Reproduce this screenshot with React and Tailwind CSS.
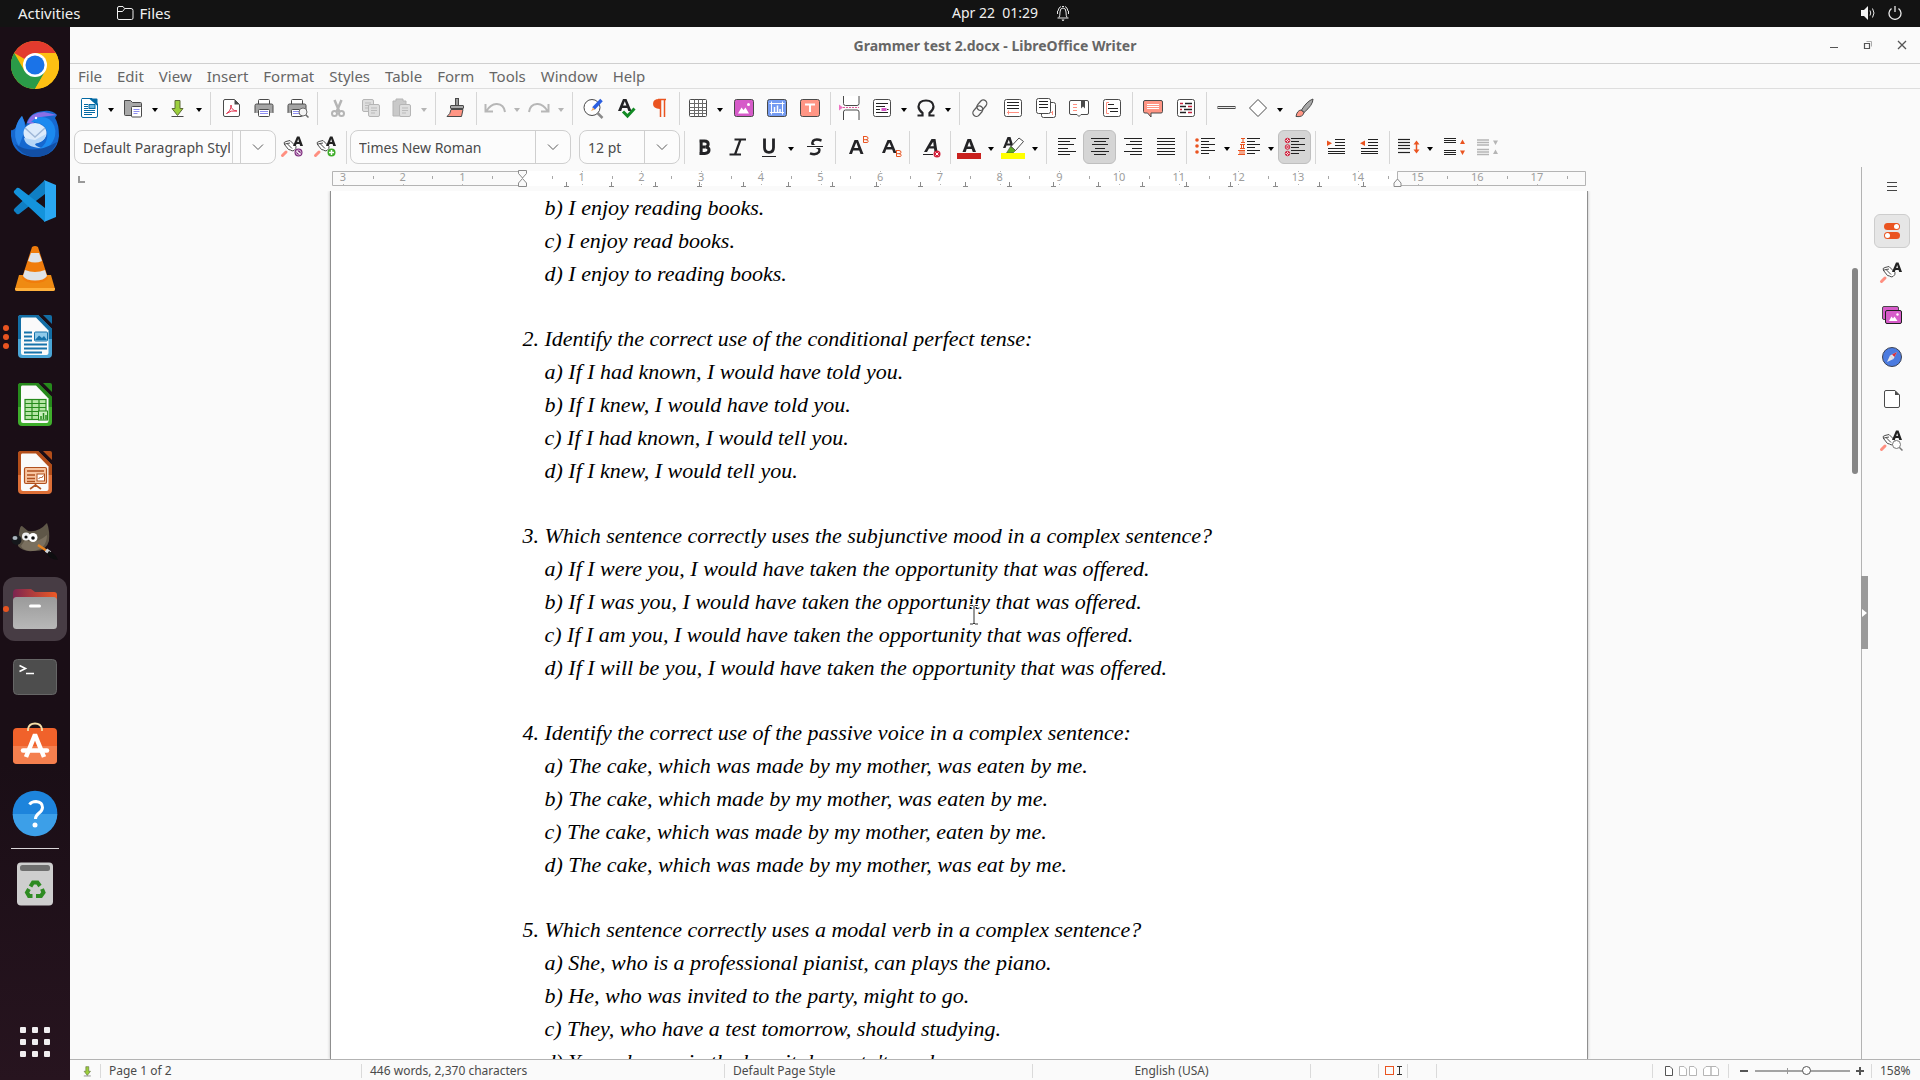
import React from "react";

const LINE = "#4a4a4a";

/* ---------- toolbar icons (24 x 24 grid) ---------- */

const lines = (rows, stroke = "#222", w = 1) =>
  rows.map(([x1, x2, y], i) => <path key={i} d={`M${x1} ${y}H${x2}`} stroke={stroke} strokeWidth={w} />);

const roller = (
  <g>
    <path d="M1.500 20.500l3.500-3.500" stroke="#ff8f80" strokeWidth="3" strokeLinecap="round" />
    <path d="M7.500 14.500L3.500 9.500Q2 7 5 6.500L9 5.500L15 11.500Q15.500 14 13 15.500Q11 16.500 9.500 15Z" fill="#fff" stroke={LINE} />
    <path d="M3 9.500L6 8.500L11 13.500M6 8.500L9 8" stroke={LINE} fill="none" />
    <path d="M12 11L16 1.500H18.500L22 11H19.200L18.600 9H15.500L14.800 11Z M16.200 7H18L17.200 4Z" fill="#222" />
  </g>
);

const docIcon = (
  <>
    <path d="M5 2.500H15L20.500 8V20a1.500 1.500 0 0 1-1.500 1.500H6A1.500 1.500 0 0 1 4.500 20V3.500a1 1 0 0 1 1-1Z" fill="#fff" stroke="#0369a3" />
    <path d="M12 2.500H19.500a1 1 0 0 1 1 1V10Z" fill="#0369a3" />
    {lines([[7, 11, 8.5], [7, 11, 10.5], [7, 11, 12.5], [7, 18, 14.5], [7, 18, 16.5], [7, 15, 18.5]], "#0369a3")}
    <rect x="12" y="8.500" width="6" height="4" fill="#69b5dd" stroke="#0369a3" />
  </>
);

const printer = (
  <>
    <rect x="6.500" y="3.500" width="11" height="6" rx="1" fill="#fff" stroke={LINE} />
    <rect x="3" y="8" width="18" height="9" rx="1.500" fill="#a5a5a5" />
    <path d="M3 17V9.500Q3 8 4.500 8H19.500Q21 8 21 9.500V17" stroke={LINE} fill="none" />
    <rect x="6.500" y="13.500" width="11" height="7" rx="1" fill="#fff" stroke={LINE} />
    {lines([[8, 16, 15.5], [8, 16, 17.5]], "#8d8df0")}
  </>
);

const page = (x, y, fill, stroke, line) => (
  <g>
    <rect x={x} y={y} width="11" height="12" rx="1.500" fill={fill} stroke={stroke} />
    {lines([[x + 2.5, x + 8.5, y + 3.5], [x + 2.5, x + 8.5, y + 6], [x + 2.5, x + 6.5, y + 8.5]], line)}
  </g>
);

const bold = "#232326";

const ICONS = {
  doc: docIcon,
  open: (
    <>
      <path d="M3.500 4.500H9.500L11.500 6.500H19.500a1 1 0 0 1 1 1V18.500a1 1 0 0 1-1 1H4.500a1 1 0 0 1-1-1Z" fill="#a8a8a8" stroke={LINE} />
      <rect x="10.500" y="10.500" width="10" height="10.500" rx="1" fill="#fff" stroke={LINE} />
      {lines([[12.5, 18.5, 13.5], [12.5, 18.5, 15.5], [12.5, 16.500, 17.5]], "#8d8df0")}
    </>
  ),
  save: (
    <>
      <path d="M10 4.500H15V12.500H18L12.500 19.500L7 12.500H10Z" fill="#9bcf3c" stroke="#5c6b35" />
      <path d="M6.500 20.500H18.500" stroke={LINE} />
    </>
  ),
  pdf: (
    <>
      <path d="M6 3.500H15.500L20.500 8.500V19a1.500 1.500 0 0 1-1.500 1.500H6A1.500 1.500 0 0 1 4.500 19V5A1.500 1.500 0 0 1 6 3.500Z" fill="#fff" stroke={LINE} />
      <path d="M15.500 3.500V8.500H20.500Z" fill={LINE} />
      <path d="M7.500 17.500Q12 15 12 9Q12 14.500 18 15Q12 14 7.500 17.500Z" stroke="#e0344f" fill="none" />
    </>
  ),
  print: printer,
  preview: (
    <>
      {printer}
      <circle cx="18" cy="16" r="4" fill="#f4f4f4" stroke="#6b6b6b" />
      <path d="M21 19L23.500 21.500" stroke="#6b6b6b" strokeWidth="1.500" />
    </>
  ),
  cut: (
    <g stroke="#b5b5b5" fill="none">
      <path d="M8.500 4L13.500 16M15.500 4L10.500 16" strokeWidth="2.500" />
      <circle cx="8.500" cy="17.500" r="2.500" strokeWidth="2" />
      <circle cx="15.500" cy="17.500" r="2.500" strokeWidth="2" />
    </g>
  ),
  copy: (<>{page(3.5, 3.5, "#dedede", "#b5b5b5", "#bbb")}{page(9.5, 8.5, "#dedede", "#b5b5b5", "#bbb")}</>),
  paste: (
    <>
      <path d="M3 5H6V3H13V5H16V20H3Z" fill="#c9c9c9" stroke="#b5b5b5" />
      {page(9.5, 8.5, "#dedede", "#b5b5b5", "#bbb")}
    </>
  ),
  brush: (
    <>
      <rect x="11.500" y="2.500" width="3" height="8" fill="#9b9b9b" stroke={LINE} />
      <rect x="6.500" y="9.500" width="13" height="3" rx=".5" fill="#a8a8a8" stroke={LINE} />
      <path d="M7 13.500H19L17.500 20.500H3Q6.500 18 7 13.500Z" fill="#ff9584" stroke={LINE} />
    </>
  ),
  undo: <path d="M2.500 8V15.500H10M3.500 15Q8 7.500 14 8Q21 8.500 22 16" stroke="#b7b7b7" strokeWidth="2" fill="none" />,
  redo: <path d="M21.500 8V15.500H14M20.500 15Q16 7.500 10 8Q3 8.500 2 16" stroke="#b7b7b7" strokeWidth="2" fill="none" />,
  find: (
    <>
      <circle cx="11" cy="11.500" r="8" fill="#fff" stroke={LINE} />
      <path d="M16.500 17L21.500 22" stroke="#8a8a8a" strokeWidth="2.500" />
      <path d="M12.500 12.500L20.500 4" stroke="#2b5fe0" strokeWidth="3.500" />
      <path d="M10 15L12 11.500L14 13.500Z" fill="#f0b26a" />
    </>
  ),
  spell: (
    <>
      <path d="M4 15L9 3H12.500L17.500 15H14.300L13.300 12H8.200L7.200 15Z M9.100 9.600H12.400L10.800 5.300Z" fill={bold} fillRule="evenodd" />
      <path d="M9 15.500L13.500 20L20.500 12.500" stroke="#128a24" strokeWidth="3" fill="none" />
    </>
  ),
  pilcrow: (
    <>
      <path d="M13 3V13Q6 12.500 6 8Q6 3 12 3Z" fill="#ea5420" />
      <path d="M11 3.500H19M13.500 3V21M17.500 3V21" stroke="#ea5420" strokeWidth="1.500" />
    </>
  ),
  table: (
    <>
      <rect x="3.500" y="3.500" width="17" height="17" rx="1" fill="#fff" stroke={LINE} />
      <path d="M3.500 7.500H20.500M3.500 11.500H20.500M3.500 14.500H20.500M3.500 17.500H20.500M8.500 3.500V20.500M12.500 3.500V20.500M16.500 3.500V20.500" stroke="#6a6a6a" />
    </>
  ),
  image: (
    <>
      <rect x="2.500" y="3.500" width="19" height="17" rx="2" fill="#d65bc9" stroke={LINE} />
      <path d="M6 17.500L9.500 11.500L11.500 14L13.500 11.500L17 17.500Z" fill="#fff" />
      <circle cx="16.500" cy="8.500" r="1.500" fill="#fff" />
    </>
  ),
  chart: (
    <>
      <rect x="2.500" y="3.500" width="19" height="17" rx="2" fill="#759cf2" stroke={LINE} />
      <path d="M4.500 7.500H19.500M6.500 5.500V18.500M17.500 5.500V18.500M5 16.500H19" stroke="#fff" />
      <path d="M9.500 16V11M12.500 16V9.500M15 16V13" stroke="#fff" strokeWidth="1.500" />
    </>
  ),
  textbox: (
    <>
      <rect x="2.500" y="3.500" width="19" height="17" rx="2" fill="#ff9584" stroke={LINE} />
      <path d="M7 8.500H17M12 8.500V16" stroke="#fff" strokeWidth="2" />
    </>
  ),
  pagebreak: (
    <>
      <path d="M4.500 0V7.500Q4.500 9.500 6.500 9.500H18Q20 9.500 20 7.500V0" fill="#fff" stroke={LINE} />
      <path d="M4.500 24V16Q4.500 14 6.500 14H18Q20 14 20 16V24" fill="#fff" stroke={LINE} />
      <path d="M4 11.500H20" stroke="#e05a9c" strokeDasharray="2 1" />
      <path d="M0 8.500V14.500L4 11.500Z" fill="#ee72c2" />
    </>
  ),
  field: (
    <>
      <rect x="3.500" y="3.500" width="17" height="17" rx="2" fill="#fff" stroke={LINE} />
      {lines([[6, 18, 7.5], [6, 15, 10.5], [6, 10, 13.5], [6, 18, 16.5]])}
      <rect x="11.500" y="12" width="5" height="3" fill="#d65bc9" />
      <path d="M17 13.500H18.500" stroke="#222" />
    </>
  ),
  omega: (
    <path d="M3.500 19.500H8.500V17Q4.500 14 4.500 10.500Q5 4.500 12 4.500Q19 4.500 19.500 10.500Q19.500 14 15.500 17V19.500H20.500" stroke={bold} strokeWidth="2.200" fill="none" />
  ),
  link: (
    <g fill="none" stroke="#5a5a5a" strokeWidth="1.300">
      <rect x="10.500" y="3.500" width="7" height="11.500" rx="3.500" transform="rotate(40 14 9)" />
      <rect x="6.500" y="9.500" width="7" height="11.500" rx="3.500" transform="rotate(40 10 15)" />
    </g>
  ),
  footnote: (
    <>
      <rect x="3.500" y="3.500" width="17" height="17" rx="2" fill="#fff" stroke={LINE} />
      {lines([[6, 18, 6.5], [6, 18, 9.500], [6, 18, 12.5]])}
      <path d="M6 16.500H18M7.500 14.500V18.500" stroke="#ff8f80" />
    </>
  ),
  endnote: (
    <>
      <rect x="7.500" y="6.500" width="14" height="15" rx="2" fill="#fff" stroke={LINE} />
      <path d="M18.500 15V19M17 16.500H19" stroke="#ff8f80" />
      <rect x="2.500" y="2.500" width="14" height="15" rx="2" fill="#fff" stroke={LINE} />
      {lines([[5, 14, 5.5], [5, 14, 8.5], [5, 14, 11.5]])}
    </>
  ),
  bookmark: (
    <>
      <path d="M4 4.500H20Q21.500 4.500 21.500 6V17Q21.500 18.500 20 18.500H14L12 20.500L10 18.500H4Q2.500 18.500 2.500 17V6Q2.500 4.500 4 4.500Z" fill="#fff" stroke={LINE} />
      {lines([[6, 10, 8.500], [6, 10, 11.5], [6, 10, 14.5]], "#ff8f80")}
      <path d="M14 5H18V12.500L16 10.500L14 12.500Z" fill={LINE} />
    </>
  ),
  crossref: (
    <>
      <rect x="3.500" y="3.500" width="17" height="17" rx="2" fill="#fff" stroke={LINE} />
      {lines([[8, 14, 8.5], [8, 18, 12.5], [10, 18, 15.5]])}
      <path d="M9 6.500H6.500V17.500H9" stroke="#ff8f80" fill="none" />
    </>
  ),
  comment: (
    <>
      <path d="M4 4.500H20Q21.500 4.500 21.500 6V15.500Q21.500 17 20 17H10V21L6.500 17H4Q2.500 17 2.500 15.500V6Q2.500 4.500 4 4.500Z" fill="#ff9584" stroke={LINE} />
      {lines([[6, 18, 8.5], [6, 18, 10.5], [6, 18, 12.5]], "#fff")}
    </>
  ),
  track: (
    <>
      <rect x="3.500" y="3.500" width="17" height="17" rx="2" fill="#fff" stroke={LINE} />
      {lines([[6, 9, 7.5], [14, 18, 10.5], [6, 8, 13.5], [14, 18, 16.5]], "#c9243f", 1.5)}
      {lines([[11, 18, 7.5], [6, 12, 10.500], [10, 18, 13.5], [6, 12, 16.5]], "#222", 1.5)}
    </>
  ),
  hline: <rect x="3" y="10.500" width="17" height="2" fill="#e8e8e8" stroke={LINE} />,
  shape: <path d="M12 3.500L20.500 12L12 20.500L3.500 12Z" fill="#fff" stroke={LINE} />,
  draw: (
    <>
      <path d="M21 3Q15 5 9.500 14L12 16.500Q21 9 21 3Z" fill="#a8a8a8" stroke={LINE} />
      <path d="M9 14Q5 14.500 4 20.500Q11 21.500 12 16.500Z" fill="#ff9584" stroke={LINE} />
    </>
  ),
  rollerNew: (
    <>
      {roller}
      <circle cx="17.500" cy="17.500" r="4" fill="#7c2a7c" />
      <path d="M15.500 16L19.500 19.500" stroke="#fff" strokeWidth="1.300" />
      <circle cx="17.500" cy="17.500" r="2.500" fill="none" stroke="#d9b9d9" />
    </>
  ),
  rollerAdd: (
    <>
      {roller}
      <circle cx="17.500" cy="17.500" r="4" fill="#3fae2a" />
      <path d="M15 17.500H20M17.500 15V20" stroke="#fff" strokeWidth="1.500" />
    </>
  ),
  roller,
  rollerFind: (
    <>
      {roller}
      <circle cx="16.500" cy="15.500" r="4" fill="#fff" stroke="#777" />
      <path d="M19.500 18.500L22.500 21.500" stroke="#777" strokeWidth="1.500" />
    </>
  ),
  bold: <path d="M6 4.500H12Q16.500 4.500 16.500 8.200Q16.500 11 13.500 11.700Q17.500 12.200 17.500 15.500Q17.500 19.500 12.500 19.500H6M8 4.500V19.500M8 11.700H13" stroke={bold} strokeWidth="3.600" fill="none" transform="translate(1.500 2.200) scale(.83)" />,
  italic: <path d="M8.500 4.500H20M3.500 19.500H15M14.500 4.500L9 19.500" stroke={bold} strokeWidth="2.200" fill="none" />,
  underline: (
    <>
      <path d="M7.500 3.500V12.500Q7.500 17.300 12 17.300Q16.500 17.300 16.500 12.500V3.500" stroke={bold} strokeWidth="2.800" fill="none" />
      <path d="M5 21.500H19" stroke={bold} />
    </>
  ),
  strike: (
    <>
      <path d="M18.500 5.500Q12.500 3.500 10 6Q8 9.500 12.500 11.500Q18 13.500 16 17Q13 20.500 7 18.300" stroke={bold} strokeWidth="2.500" fill="none" />
      <path d="M4 11.500H20" stroke="#fafafa" strokeWidth="3" />
      <path d="M4 11.500H20" stroke={bold} />
    </>
  ),
  sup: (
    <>
      <path d="M5 19L10.500 5H14L19.500 19H16.500L15.200 15.500H9.200L8 19Z M10.100 13H14.300L12.300 7.500Z" fill={bold} fillRule="evenodd" />
      <path d="M19.500 1.500H22Q24 1.500 24 3.200T22 4.700H19.500M22 4.700Q24.200 4.700 24.200 6.300T22 7.500H19.500V1" stroke="#ea5420" fill="none" />
    </>
  ),
  sub: (
    <>
      <path d="M5 18L10.500 5H14L19.500 18H16.500L15.200 14.500H9.200L8 18Z M10.100 12H14.300L12.300 7.500Z" fill={bold} fillRule="evenodd" />
      <path d="M19.500 15.500H22Q24 15.500 24 17.200T22 18.700H19.500M22 18.700Q24.200 18.700 24.200 20.300T22 21.500H19.500V15" stroke="#ea5420" fill="none" />
    </>
  ),
  clear: (
    <>
      <path d="M6 17L13.500 4H17.500L19.500 17H16.500L16 13.500H11L9 17Z M12.300 11.200H15.700L15.200 6.800Z" fill={bold} fillRule="evenodd" />
      <path d="M5 19.500H15" stroke={bold} />
      <circle cx="19" cy="19" r="3.500" fill="#d3213b" />
      <path d="M17.500 17.500L20.500 20.500M20.500 17.500L17.500 20.500" stroke="#fff" />
    </>
  ),
  fontcolor: (
    <>
      <path d="M5.500 17L10.500 4H14L19 17H15.800L14.700 14H9.700L8.700 17Z M10.500 11.500H13.900L12.200 6.800Z" fill={bold} fillRule="evenodd" />
      <rect x="0" y="18" width="24" height="6" fill="#c9211e" />
    </>
  ),
  highlight: (
    <>
      <path d="M2 13L6.500 2H9.500L13 13H10.500L9.500 10.500H5.500L4.500 13Z M6.300 8.500H9L7.800 4.800Z" fill={bold} fillRule="evenodd" />
      <path d="M10 11.500L18 3L22.500 6.500L14.500 15.500Z" fill="#fff" stroke={LINE} />
      <path d="M5.500 18L9.500 11.500L14.500 15.500L12 18Z" fill="#5fae1f" stroke={LINE} strokeWidth=".6" />
      <rect x="0" y="18" width="24" height="6" fill="#ffff00" />
    </>
  ),
  left: lines([[3, 21, 3.5], [3, 15, 6.5], [3, 19, 9.5], [3, 13, 13.5], [3, 21, 16.5], [3, 15, 19.500]]),
  center: lines([[3, 21, 3.5], [6, 18, 6.5], [4, 20, 9.5], [7, 17, 13.5], [3, 21, 16.5], [6, 18, 19.500]]),
  right: lines([[3, 21, 3.5], [9, 21, 6.5], [5, 21, 9.5], [11, 21, 13.5], [3, 21, 16.5], [9, 21, 19.500]]),
  justify: lines([[3, 21, 3.5], [3, 21, 6.5], [3, 21, 9.5], [3, 21, 13.5], [3, 21, 16.5], [3, 21, 19.500]]),
  bullets: (
    <>
      {lines([[8, 22, 3.5], [8, 16, 6.5], [8, 22, 9.5], [8, 16, 12.5], [8, 22, 15.5], [8, 16, 18.5]])}
      {[5, 11, 17].map((y) => <circle key={y} cx="4" cy={y} r="1.800" fill="#ea5420" />)}
    </>
  ),
  numbers: (
    <>
      {lines([[10, 23, 3.5], [10, 18, 6.5], [10, 23, 9.5], [10, 18, 12.5], [10, 23, 15.5], [10, 18, 18.5]])}
      <path d="M4 3.500H8M6 3.500V7M4 7.500H8M3 9.500H8M4.500 9.500V13M6.500 9.500V13M3 13.500H8M1 15.500H8M3 15.500V19M5 15.500V19M7 15.500V19M1 19.500H8" stroke="#ea5420" />
    </>
  ),
  nolist: (
    <>
      {lines([[8, 22, 3.5], [8, 16, 6.5], [8, 22, 9.5], [8, 16, 12.5], [8, 22, 15.5], [8, 16, 18.5]])}
      {[5.5, 12, 18.5].map((y) => (
        <g key={y} stroke="#cf2a45">
          <circle cx="4.500" cy={y} r="2.300" fill="#f6d8dc" />
          <path d={`M3 ${y - 1.5}l3 3M6 ${y - 1.5}l-3 3`} />
        </g>
      ))}
    </>
  ),
  indent: (
    <>
      {lines([[11, 21, 4.5], [11, 21, 7.500], [11, 21, 10.5], [4, 21, 13.5], [4, 21, 16.5], [4, 21, 18.500]])}
      <path d="M3 5.500V11L8 8.300Z" fill="#ea5420" />
    </>
  ),
  outdent: (
    <>
      {lines([[11, 21, 4.5], [11, 21, 7.500], [11, 21, 10.5], [4, 21, 13.5], [4, 21, 16.5], [4, 21, 18.500]])}
      <path d="M8 5.500V11L3 8.300Z" fill="#ea5420" />
    </>
  ),
  spacing: (
    <>
      {lines([[2, 14, 4.500], [2, 14, 7.500], [2, 14, 10.5], [2, 14, 13.500], [2, 14, 17.500]], "#222", 1.2)}
      <path d="M20.500 8V16" stroke="#ea5420" strokeWidth="1.500" />
      <path d="M17.500 9.500L20.500 5.500L23.500 9.500ZM17.500 14.500L20.500 18.500L23.500 14.500Z" fill="#ea5420" />
    </>
  ),
  paraMore: (
    <>
      {lines([[2, 14, 3.500], [2, 14, 5.500], [2, 14, 7.5], [2, 14, 15.500], [2, 14, 17.500], [2, 14, 19.5]])}
      <path d="M18 9L20.500 4.500L23 9ZM18 15.500L20.500 20L23 15.500Z" fill="#ea5420" />
    </>
  ),
  paraLess: (
    <>
      {lines([[2, 14, 5], [2, 14, 7.500], [2, 14, 10], [2, 14, 14.500], [2, 14, 17], [2, 14, 19.500]], "#b5b5b5", 1.5)}
      <path d="M18 5.500L20.500 10L23 5.500ZM18 19L20.500 14.500L23 19Z" fill="#b5b5b5" />
    </>
  ),
  properties: (
    <>
      <rect x="4" y="4" width="16" height="7" rx="3.500" fill="#ea5420" />
      <rect x="4" y="13" width="16" height="7" rx="3.500" fill="#ea5420" />
      <circle cx="16.500" cy="7.500" r="2.500" fill="#fff" />
      <circle cx="7.500" cy="16.500" r="2.500" fill="#fff" />
    </>
  ),
  gallery: (
    <>
      <rect x="2.500" y="3.500" width="16" height="13" rx="1.500" fill="#d65bc9" stroke={LINE} />
      <rect x="5.500" y="7.500" width="16" height="13" rx="1.500" fill="#d65bc9" stroke="#1f1f1f" />
      <path d="M9 18L11.500 13.500L13 15.500L14.500 13.500L17.500 18Z" fill="#fff" />
      <circle cx="17.500" cy="11.500" r="1.200" fill="#fff" />
    </>
  ),
  navigator: (
    <>
      <circle cx="12" cy="12" r="9.500" fill="#4b7be0" stroke="#3c4254" />
      <path d="M7 17L10 10.500L13.500 14Z" fill="#e6e6ea" />
      <path d="M10 10.500L17 7L13.500 14Z" fill="#e6e6ea" />
      <path d="M12 9.500L17 7L14.500 12Z" fill="#d6303f" />
    </>
  ),
  pageDeck: (
    <>
      <path d="M6 3.500H15L19.500 8V19Q19.500 20.500 18 20.500H6Q4.500 20.500 4.500 19V5Q4.500 3.500 6 3.500Z" fill="#fff" stroke={LINE} />
      <path d="M15 3.500V8H19.500Z" fill={LINE} />
    </>
  ),
  menu: <path d="M7 7.500H17M7 11.500H17M7 15.500H17" stroke="#444" />,
};

function Icon({ name, className = "size-6" }) {
  return (
    <svg viewBox="0 0 24 24" className={`${className} shrink-0 overflow-visible`} fill="none" aria-hidden="true">
      {ICONS[name]}
    </svg>
  );
}

function Tool({ name, label, active }) {
  return (
    <button
      aria-label={label}
      aria-pressed={active ? true : undefined}
      className={`flex h-[34px] w-[33px] shrink-0 items-center justify-center rounded-md border ${active ? "border-[#bfbfbf] bg-[#d5d5d5]" : "border-transparent"}`}
    >
      <Icon name={name} />
    </button>
  );
}

function Split({ name, label, muted }) {
  return (
    <div className="flex shrink-0">
      <button aria-label={label} className="flex h-[34px] w-[29px] items-center justify-center">
        <Icon name={name} />
      </button>
      <button aria-label={`${label} options`} className="flex h-[34px] w-[15px] items-center justify-center pt-[4px]">
        <svg viewBox="0 0 6 4" className="h-[4px] w-[6px]" aria-hidden="true">
          <path d="M0 0H6L3 4Z" fill={muted ? "#b5b5b5" : "#000"} />
        </svg>
      </button>
    </div>
  );
}

function Combo({ value, label, className, inner }) {
  return (
    <div className={`flex h-[34px] shrink-0 overflow-hidden rounded-lg border border-[#cfcfcf] bg-[#fcfcfc] ${className}`}>
      <div className="flex min-w-0 flex-1 pr-[2px] pl-[8px]">
        <input aria-label={label} defaultValue={value} className="w-full min-w-0 bg-transparent text-[14px] text-[#4a4a4a] outline-none" />
      </div>
      {inner && <span className="w-[8px] border-l border-[#d5d5d5]" />}
      <button aria-label={`${label} list`} className="flex w-[35px] items-center justify-center border-l border-[#cfcfcf]">
        <svg viewBox="0 0 12 8" className="h-[8px] w-[12px]" fill="none" stroke="#5a5a5a" aria-hidden="true">
          <path d="M1 1.500L6 6.500L11 1.500" />
        </svg>
      </button>
    </div>
  );
}

const ROW1 = [
  ["s", "doc", "New"], ["s", "open", "Open"], ["s", "save", "Save"], "|",
  ["t", "pdf", "Export as PDF"], ["t", "print", "Print"], ["t", "preview", "Print Preview"], "|",
  ["t", "cut", "Cut"], ["t", "copy", "Copy"], ["s", "paste", "Paste", true], "|",
  ["t", "brush", "Clone Formatting"], "|",
  ["s", "undo", "Undo", true], ["s", "redo", "Redo", true], "|",
  ["t", "find", "Find and Replace"], ["t", "spell", "Check Spelling"], ["t", "pilcrow", "Formatting Marks"], "|",
  ["s", "table", "Insert Table"], ["t", "image", "Insert Image"], ["t", "chart", "Insert Chart"], ["t", "textbox", "Insert Text Box"], "|",
  ["t", "pagebreak", "Insert Page Break"], ["s", "field", "Insert Field"], ["s", "omega", "Insert Special Character"], "|",
  ["t", "link", "Insert Hyperlink"], ["t", "footnote", "Insert Footnote"], ["t", "endnote", "Insert Endnote"], ["t", "bookmark", "Insert Bookmark"], ["t", "crossref", "Insert Cross-reference"], "|",
  ["t", "comment", "Insert Comment"], ["t", "track", "Track Changes"], "|",
  ["t", "hline", "Insert Line"], ["s", "shape", "Basic Shapes"], ["t", "draw", "Show Draw Functions"],
];

const ROW2 = [
  "|", ["t", "bold", "Bold"], ["t", "italic", "Italic"], ["s", "underline", "Underline"], ["t", "strike", "Strikethrough"], "|",
  ["t", "sup", "Superscript"], ["t", "sub", "Subscript"], "|",
  ["t", "clear", "Clear Formatting"], "|",
  ["s", "fontcolor", "Font Color"], ["s", "highlight", "Highlighting Color"], "|",
  ["t", "left", "Align Left"], ["t", "center", "Align Center", false, true], ["t", "right", "Align Right"], ["t", "justify", "Justified"], "|",
  ["s", "bullets", "Unordered List"], ["s", "numbers", "Ordered List"], ["t", "nolist", "No List", false, true], "|",
  ["t", "indent", "Increase Indent"], ["t", "outdent", "Decrease Indent"], "|",
  ["s", "spacing", "Line Spacing"], ["t", "paraMore", "Increase Paragraph Spacing"], ["t", "paraLess", "Decrease Paragraph Spacing"],
];

function Divider() {
  return (
    <span className="flex w-[8px] shrink-0 items-center justify-center">
      <span className="h-[33px] w-px bg-[#d6d6d6]" />
    </span>
  );
}

const renderTools = (items) =>
  items.map((it, i) =>
    it === "|" ? <Divider key={i} />
      : it[0] === "s" ? <Split key={i} name={it[1]} label={it[2]} muted={it[3]} />
        : <Tool key={i} name={it[1]} label={it[2]} active={it[4]} />
  );

/* ---------- ruler ---------- */

function Ruler() {
  const unit = 59.7;
  const zero = 191;
  const marks = [];
  for (let n = -3; n <= 17; n++) marks.push(n);
  const tabs = Array.from({ length: 19 }, (_, i) => zero + 44.27 * (i + 1));
  return (
    <svg viewBox="0 0 1256 24" className="h-6 w-[1256px] shrink-0" fontFamily="'Noto Sans', sans-serif" fontSize="11" aria-label="Ruler">
      <rect x="191" y="4" width="875" height="15" fill="#fff" />
      <path d="M191 4.500H1.500V18.500H191M1066.500 19V4.500H1254.500V18.500H1066" fill="none" stroke="#b4b4b4" />
      {marks.map((n) => n !== 0 && (
        <g key={n}>
          <text x={zero + n * unit} y="14" textAnchor="middle" fill="#9d9d9d">{Math.abs(n)}</text>
          <rect x={Math.round(zero + n * unit)} y="17" width="1" height="1" fill="#b4b4b4" />
          {n > 0 && n < 15 && <rect x={Math.round(zero + n * unit)} y="4" width="1" height="1" fill="#b4b4b4" />}
        </g>
      ))}
      {marks.map((n) => <rect key={n} x={Math.round(zero + (n + 0.5) * unit)} y="9" width="1" height="3" fill="#a8a8a8" />)}
      {tabs.map((x) => (
        <path key={x} d={`M${Math.round(x) + 0.5} 15V19M${Math.round(x) - 2} 19.500h5`} stroke="#8a8a8a" />
      ))}
      <path d="M187.500 3.500H195.500V6.500L191.500 11L187.500 6.500ZM187.500 19.500H195.500V16L191.500 11.500L187.500 16Z" fill="#fafafa" stroke="#8a8a8a" />
      <path d="M1063 19.500H1070V16L1066.500 12L1063 16Z" fill="#fafafa" stroke="#8a8a8a" />
    </svg>
  );
}

/* ---------- document text ---------- */

const QUESTIONS = [
  { opts: ["b) I enjoy reading books.", "c) I enjoy read books.", "d) I enjoy to reading books."] },
  { n: 2, q: "Identify the correct use of the conditional perfect tense:", opts: ["a) If I had known, I would have told you.", "b) If I knew, I would have told you.", "c) If I had known, I would tell you.", "d) If I knew, I would tell you."] },
  { n: 3, q: "Which sentence correctly uses the subjunctive mood in a complex sentence?", opts: ["a) If I were you, I would have taken the opportunity that was offered.", "b) If I was you, I would have taken the opportunity that was offered.", "c) If I am you, I would have taken the opportunity that was offered.", "d) If I will be you, I would have taken the opportunity that was offered."] },
  { n: 4, q: "Identify the correct use of the passive voice in a complex sentence:", opts: ["a) The cake, which was made by my mother, was eaten by me.", "b) The cake, which made by my mother, was eaten by me.", "c) The cake, which was made by my mother, eaten by me.", "d) The cake, which was made by my mother, was eat by me."] },
  { n: 5, q: "Which sentence correctly uses a modal verb in a complex sentence?", opts: ["a) She, who is a professional pianist, can plays the piano.", "b) He, who was invited to the party, might to go.", "c) They, who have a test tomorrow, should studying.", "d) You, who are in the hospital, mustn't smoke."] },
];

function Page() {
  return (
    <article className="relative w-[1258px] shrink-0 border-x border-[#8f8f8f] bg-white pl-[192px] shadow-[0_0_3px_rgba(0,0,0,0.25)]">
      <div className="flex flex-col gap-[32px] whitespace-nowrap font-['Liberation_Serif',serif] text-[22px] leading-[33px] text-black italic">
        {QUESTIONS.map((item, i) => (
          <section key={i}>
            {item.q && (
              <p className="flex">
                <span className="w-[22px] shrink-0">{item.n}.</span>
                <span>{item.q}</span>
              </p>
            )}
            {item.opts.map((o) => <p key={o} className="pl-[22px]">{o}</p>)}
          </section>
        ))}
      </div>
      <svg viewBox="0 0 12 26" className="absolute top-[412px] left-[637px] h-[26px] w-[12px]" fill="none" aria-hidden="true">
        <path d="M2 2.500H5L6 3.500L7 2.500H10M6 3.500V20M2 21H5L6 20L7 21H10" stroke="#fff" strokeWidth="3" />
        <path d="M2 2.500H5L6 3.500L7 2.500H10M6 3.500V20M2 21H5L6 20L7 21H10" stroke="#333" />
      </svg>
    </article>
  );
}

/* ---------- dock ---------- */

function OfficeIcon({ dark, light, children }) {
  return (
    <svg viewBox="0 0 48 48" className="size-12" aria-hidden="true">
      <path d="M10 2H27L41 16V41Q41 45 37 45H11Q7 45 7 41V5Q7 2 10 2Z" fill={light} />
      <path d="M10 2H27L41 16V26H7V5Q7 2 10 2Z" fill={dark} />
      <path d="M11 4.500H25L37.500 17.500V40Q37.500 42 35.500 42H12Q10 42 10 40V6Q10 4.500 11 4.500Z" fill="#fafafa" />
      <path d="M32 2H39Q41 2 41 4V11Z" fill={dark} />
      <g transform="translate(0 -1)">{children}</g>
    </svg>
  );
}

const DOCK = [
  ["Google Chrome", (
    <svg viewBox="0 0 48 48" className="size-12" aria-hidden="true">
      <circle cx="24" cy="24" r="24" fill="#fbbc09" />
      <path d="M24 24L3.200 12A24 24 0 0 1 44.800 12Z" fill="#e33b2e" />
      <path d="M24 24L34.400 30L24 48A24 24 0 0 1 3.200 12L13.600 30Z" fill="#2a9b48" />
      <path d="M24 12H44.800A24 24 0 0 1 24 48L34.400 30Z" fill="#fdc013" />
      <circle cx="24" cy="24" r="12" fill="#fff" />
      <circle cx="24" cy="24" r="9.500" fill="#1a73e8" />
    </svg>
  )],
  ["Thunderbird", (
    <svg viewBox="0 0 48 48" className="size-12" aria-hidden="true">
      <path d="M0 21Q3 22 5 18Q7 11 11 7Q14 13 15 17Q17 3 33 2Q41 1 46 6L44 9Q48 15 48 27Q46 47 24 48Q2 47 0 27Z" fill="#1668cf" />
      <path d="M5 18Q7 11 11 7Q14 13 14 21L8 37Q2 29 5 18Z" fill="#2a86ea" />
      <path d="M16 14Q20 3 33 3L46 6L30 8Q24 9 22 15Z" fill="#8a6fe6" />
      <path d="M20 13Q28 5 38 10Q46 16 44 27Q40 41 26 41Q38 35 36 23Q34 13 20 13Z" fill="#1b8af0" />
      <path d="M4 35Q22 47 46 33Q40 48 24 48Q10 47 4 35Z" fill="#124fa5" />
      <ellipse cx="24" cy="24" rx="11.500" ry="10" fill="#dcebfb" />
      <path d="M13 29Q14 38 30 39Q20 35 27 34Q34 32 35 25L24 31Z" fill="#b5d6f7" />
      <path d="M14 19L24 28L34 19" stroke="#9fb8d8" strokeWidth="1.500" fill="none" />
      <circle cx="25" cy="9" r="1.200" fill="#fff" />
    </svg>
  )],
  ["Visual Studio Code", (
    <svg viewBox="0 0 48 48" className="size-12" aria-hidden="true">
      <path d="M34 3V17L8 37Q6 38 5 36L3 34Q2 33 4 31Z" fill="#0f7fc4" />
      <path d="M34 45V31L8 11Q6 10 5 12L3 14Q2 15 4 17Z" fill="#1493dc" />
      <path d="M33 3L45 8V40L33 45Q34 44 34 42V6Q34 4 33 3Z" fill="#2aa7f2" />
    </svg>
  )],
  ["VLC", (
    <svg viewBox="0 0 48 48" className="size-12" aria-hidden="true">
      <path d="M8 30H40L44 44Q44 46 42 46H6Q4 46 4 44Z" fill="#ef8a12" />
      <path d="M4 43H44V44Q44 46 42 46H6Q4 46 4 44Z" fill="#ffb13d" />
      <path d="M21 2Q24 0 27 2L37 33Q34 38 24 38T11 33Z" fill="#f07c0c" />
      <path d="M20 8H28L31 16Q24 19 17 16Z" fill="#dfe3e8" />
      <path d="M14 25Q24 29 34 25L36 31Q33 35.500 24 35.500T12 31Z" fill="#dfe3e8" />
    </svg>
  )],
  ["LibreOffice Writer", (
    <OfficeIcon dark="#136ea5" light="#4aa5d6">
      <path d="M13 20.500H21M13 24.500H21M13 28.500H21M13 32.500H36M13 36.500H36M13 40.500H31" stroke="#1673ab" strokeWidth="1.800" />
      <rect x="23.500" y="20" width="13" height="9" rx="1" fill="#8fcaea" stroke="#1673ab" />
      <path d="M24 28L28 23.500L31 26L33 24L36 28Z" fill="#1673ab" />
    </OfficeIcon>
  ), 3],
  ["LibreOffice Calc", (
    <OfficeIcon dark="#268a1c" light="#3fae2c">
      <rect x="14" y="19.500" width="21" height="20" fill="#b5e6a5" stroke="#268a1c" strokeWidth="1.200" />
      <path d="M14 23.500H35M14 27.500H35M14 31.500H35M14 35.500H35M21 19.500V39.500M28 19.500V39.500" stroke="#268a1c" strokeWidth="1.200" />
      <rect x="27.500" y="31" width="9" height="9" fill="#c9efbd" stroke="#268a1c" />
      <path d="M30 39.500V36M32.500 39.500V33M35 39.500V35" stroke="#268a1c" strokeWidth="1.500" />
    </OfficeIcon>
  )],
  ["LibreOffice Impress", (
    <OfficeIcon dark="#b34e1a" light="#dd6f37">
      <rect x="13.500" y="19.500" width="22" height="16" rx="1.500" fill="#f8c6a2" stroke="#b0501f" strokeWidth="1.200" />
      <path d="M16 23H33M16 27H24M16 30.500H24M16 33.500H24M24.500 36V39M19 41L24.500 37L30 41" stroke="#b0501f" strokeWidth="1.600" fill="none" />
      <rect x="26" y="26" width="7.500" height="7" fill="#fff" stroke="#b0501f" />
      <path d="M27.500 31L29.500 29L30.500 30L32.500 27.500" stroke="#b0501f" fill="none" />
    </OfficeIcon>
  )],
  ["GIMP", (
    <svg viewBox="0 0 48 48" className="size-12" aria-hidden="true">
      <path d="M8 16Q9 8 11 9L17 14Q27 16 36 6Q39 14 38 24Q35 35 22 34Q12 35 7 29Z" fill="#5f5748" />
      <path d="M14 23Q24 28 36 18Q36 32 22 34Q12 34 10 29Z" fill="#7a705f" />
      <circle cx="5.500" cy="23" r="5" fill="#15171b" />
      <ellipse cx="4" cy="21" rx="2.500" ry="2" fill="#aab4be" />
      <circle cx="15" cy="19.500" r="4" fill="#efefef" />
      <circle cx="22" cy="20.500" r="4.500" fill="#fff" />
      <circle cx="15" cy="20" r="1.600" fill="#111" />
      <circle cx="22" cy="21" r="1.800" fill="#111" />
      <path d="M27 28L36 34" stroke="#e98420" strokeWidth="2.500" />
      <path d="M35 33L39 36" stroke="#d0d4d8" strokeWidth="4" />
      <path d="M38 34Q45 37 47 43Q38 42 36 37Z" fill="#0e0e10" />
    </svg>
  )],
  ["Files", (
    <svg viewBox="0 0 48 48" className="size-12" aria-hidden="true">
      <defs>
        <linearGradient id="tab" x1="0" x2="1"><stop offset="0" stopColor="#7c2450" /><stop offset="1" stopColor="#ee5a24" /></linearGradient>
        <linearGradient id="front" x1="0" y1="0" x2="0" y2="1"><stop offset="0" stopColor="#9a9a9a" /><stop offset="1" stopColor="#b8b8b8" /></linearGradient>
      </defs>
      <path d="M2 8Q2 4 6 4H20L24 7H43Q46 7 46 10V20H2Z" fill="url(#tab)" />
      <rect x="2" y="12" width="44" height="32" rx="3.500" fill="url(#front)" />
      <rect x="18" y="19.500" width="12" height="3" rx="1.500" fill="#fff" />
    </svg>
  ), 1, true],
  ["Terminal", (
    <svg viewBox="0 0 48 48" className="size-12" aria-hidden="true">
      <rect x="2.500" y="6.500" width="43" height="35" rx="4" fill="#4d4d4d" stroke="#666" />
      <path d="M8.500 12.500L14.500 15.500L8.500 18.500M15 20.500H23" stroke="#fff" strokeWidth="1.600" fill="none" />
    </svg>
  )],
  ["Ubuntu Software", (
    <svg viewBox="0 0 48 48" className="size-12" aria-hidden="true">
      <rect x="2" y="7" width="44" height="36" rx="4" fill="#f0622b" />
      <path d="M2 25H46V39Q46 43 42 43H6Q2 43 2 39Z" fill="#f47f4e" />
      <path d="M17 10V8Q18 2.500 24 2.500T31 8V10" stroke="#f7dfa8" strokeWidth="1.800" fill="none" />
      <path d="M15 36L23.500 15H24.500L33 36" stroke="#fff" strokeWidth="4.500" fill="none" />
      <path d="M12 29.500H36" stroke="#fff" strokeWidth="4.500" strokeLinecap="round" />
    </svg>
  )],
  ["Help", (
    <svg viewBox="0 0 48 48" className="size-12" aria-hidden="true">
      <circle cx="24" cy="24" r="22.300" fill="#1d84dc" />
      <path d="M1.700 25A22.300 22.300 0 0 0 46.300 25Z" fill="#3c9fe8" />
      <path d="M18.500 15.500Q20.500 12.500 25 12.500Q31.500 13 31.500 18.500Q31.500 21.500 27.500 24.500Q24.500 27 24.500 30" stroke="#fff" strokeWidth="3" fill="none" />
      <circle cx="24" cy="36" r="2.500" fill="#fff" />
    </svg>
  )],
];

function DockItem({ label, dots = 0, active, children }) {
  return (
    <button aria-label={label} className="relative flex h-[68px] w-full shrink-0 items-center justify-center">
      <span className={`flex size-16 items-center justify-center rounded-xl ${active ? "bg-[#473c44]" : ""}`}>{children}</span>
      <span className="absolute inset-y-0 left-[3px] flex flex-col items-center justify-center gap-[3px]">
        {Array.from({ length: dots }, (_, i) => <span key={i} className="size-[6px] rounded-full bg-[#e95420]" />)}
      </span>
    </button>
  );
}

function Dock() {
  return (
    <nav aria-label="Dock" className="flex w-[70px] shrink-0 flex-col bg-gradient-to-b from-[#1a0e16] from-70% to-[#27141f] py-[4px]">
      {DOCK.map(([label, art, dots, active]) => <DockItem key={label} label={label} dots={dots} active={active}>{art}</DockItem>)}
      <span className="mx-auto my-px h-px w-12 shrink-0 bg-[#d9d5d8]" />
      <DockItem label="Trash">
        <svg viewBox="0 0 48 48" className="size-12" aria-hidden="true">
          <rect x="6" y="2.500" width="36" height="43" rx="4" fill="#cecece" />
          <rect x="9" y="5" width="30" height="6" rx="2.500" fill="#6f6f6f" />
          <g fill="none" stroke="#2e8b22" strokeWidth="4">
            <path d="M19.500 26.500L22 22.500H26.500L29 26" />
            <path d="M31 29L32.500 32.500L30 36H25" />
            <path d="M21.500 36H18L16 32.500L18 29" />
          </g>
        </svg>
      </DockItem>
      <span className="flex-1" />
      <DockItem label="Show Applications">
        <span className="grid grid-cols-3 gap-[6px]">
          {Array.from({ length: 9 }, (_, i) => <span key={i} className="size-[6px] rounded-[1px] bg-[#f0eef0]" />)}
        </span>
      </DockItem>
    </nav>
  );
}

/* ---------- chrome ---------- */

function TopBar() {
  return (
    <header className="grid h-[27px] shrink-0 grid-cols-3 items-center bg-[#131313] px-[18px] pb-px text-[15px] leading-[20px] text-[#f0f0f0]">
      <div className="flex items-center gap-[36px]">
        <button>Activities</button>
        <button className="flex items-center gap-[6px]">
          <svg viewBox="0 0 17 15" className="h-[15px] w-[17px]" fill="none" stroke="#f0f0f0" aria-hidden="true">
            <path d="M.500 12V2Q.500 .500 2 .500H6L7.500 2.500H14Q16 2.500 16 4.500V12Q16 13.500 14.500 13.500H2Q.500 13.500 .500 12ZM.500 5.500H5.500L7.500 3" />
          </svg>
          Files
        </button>
      </div>
      <div className="flex items-center justify-center gap-[18px] pl-[102px]">
        <button className="text-[14px] whitespace-pre">Apr 22  01:29</button>
        <svg viewBox="0 0 14 17" className="h-[17px] w-[14px]" fill="none" stroke="#e8e8e8" aria-hidden="true">
          <path d="M1.500 13H12.500M3 12.500Q4 11 4 7Q4 3 7 3T10 7Q10 11 11 12.500M5 1.500Q2.500 2.500 2 6M9 1.500Q11.500 2.500 12 6M6 1.500H8M1.500 6V9M12.500 6V9" />
          <path d="M5.500 14.500H8.500L7.500 16H6.500Z" fill="#e8e8e8" stroke="none" />
        </svg>
      </div>
      <div className="flex items-center justify-end gap-[12px]">
        <svg viewBox="0 0 15 14" className="h-[14px] w-[15px]" fill="none" stroke="#e8e8e8" aria-hidden="true">
          <path d="M0 4H3L7 0V14L3 10H0Z" fill="#f4f4f4" stroke="none" />
          <path d="M9 4.500Q10.500 7 9 9.500M11.500 2.500Q14.500 7 11.500 11.500" />
        </svg>
        <svg viewBox="0 0 14 14" className="h-[14px] w-[14px]" fill="none" stroke="#e8e8e8" aria-hidden="true">
          <path d="M3.500 2.500A6 6 0 1 0 10.500 2.500M7 0V6" strokeWidth="1.300" />
        </svg>
      </div>
    </header>
  );
}

function TitleBar() {
  return (
    <div className="flex h-[37px] shrink-0 items-center border-b border-[#cfcfcf] pr-[10px]">
      <h1 className="flex-1 pl-[94px] text-center text-[14px] font-bold text-[#666]">Grammer test 2.docx - LibreOffice Writer</h1>
      <div className="flex gap-[18px]">
        <button aria-label="Minimize" className="size-4"><svg viewBox="0 0 16 16" stroke="#555" aria-hidden="true"><path d="M4 10.500H12" /></svg></button>
        <button aria-label="Restore" className="size-4"><svg viewBox="0 0 16 16" stroke="#555" fill="none" aria-hidden="true"><path d="M4.500 6.500H9.500V11.500H4.500Z" strokeWidth="1.200" /><path d="M6.500 4.500H11.500V9.500" stroke="#aaa" /></svg></button>
        <button aria-label="Close" className="size-4"><svg viewBox="0 0 16 16" stroke="#555" strokeWidth="1.300" aria-hidden="true"><path d="M4 4L12 12M12 4L4 12" /></svg></button>
      </div>
    </div>
  );
}

const MENUS = ["File", "Edit", "View", "Insert", "Format", "Styles", "Table", "Form", "Tools", "Window", "Help"];

function StatusBar() {
  const cell = "flex h-[14px] items-center border-l border-[#dadada] px-[8px] whitespace-nowrap";
  return (
    <footer className="relative grid h-[21px] shrink-0 grid-cols-[30px_261fr_363fr_308fr_278fr_68px_29px_29px_216fr_76px_143px_49px] items-center border-t border-[#b3b3b3] bg-[#fafafa] pt-px text-[12px] text-[#4a4a4a]">
      <span className="flex justify-center pl-[4px]"><Icon name="save" className="size-[14px]" /></span>
      <span className={cell}>Page 1 of 2</span>
      <span className={cell}>446 words, 2,370 characters</span>
      <span className={cell}>Default Page Style</span>
      <span className={`${cell} justify-center`}>English (USA)</span>
      <span className={cell} />
      <span className="flex h-[14px] items-center justify-center gap-[3px] border-l border-[#dadada]">
        <span className="size-[9px] border border-[#ea5420]" />
        <svg viewBox="0 0 5 9" className="h-[9px] w-[5px]" stroke="#333" fill="none" aria-hidden="true"><path d="M0 .500H5M2.500 0V9M0 8.500H5" /></svg>
      </span>
      <span className={cell} />
      <span className={cell} />
      <span className="flex h-[14px] items-center justify-center gap-[6px] border-l border-[#dadada] pl-[2px]">
        <svg viewBox="0 0 8 10" className="h-[10px] w-[8px]" fill="#fff" stroke="#555" aria-hidden="true"><path d="M.500 .500H5L7.500 3V9.500H.500Z" /></svg>
        <svg viewBox="0 0 18 10" className="h-[10px] w-[18px]" fill="#fff" stroke="#b5b5b5" aria-hidden="true"><path d="M.500 .500H5L7.500 3V9.500H.500ZM10.500 .500H15L17.500 3V9.500H10.500Z" /></svg>
        <svg viewBox="0 0 16 10" className="h-[10px] w-[16px]" fill="#fff" stroke="#b5b5b5" aria-hidden="true"><path d="M8 .500H3L.500 3V9.500H8ZM8 .500H13L15.500 3V9.500H8Z" /></svg>
      </span>
      <span className="flex h-[14px] items-center gap-[5px] border-l border-[#dadada] pr-[6px] pl-[11px]">
        <button aria-label="Zoom out" className="flex size-[10px] items-center"><span className="h-[2px] w-[8px] bg-[#555]" /></button>
        <span className="relative flex h-[12px] flex-1 items-center">
          <span className="h-[2px] w-full bg-[#a3a3a3]" />
          <span className="absolute top-[3px] left-1/3 h-[6px] w-px bg-[#999]" />
          <input type="range" aria-label="Zoom" min="20" max="270" defaultValue="158" className="absolute inset-0 w-full appearance-none bg-transparent [&::-webkit-slider-thumb]:size-[9px] [&::-webkit-slider-thumb]:appearance-none [&::-webkit-slider-thumb]:rounded-full [&::-webkit-slider-thumb]:border [&::-webkit-slider-thumb]:border-[#555] [&::-webkit-slider-thumb]:bg-white" />
        </span>
        <button aria-label="Zoom in" className="size-[10px]">
          <svg viewBox="0 0 10 10" stroke="#555" strokeWidth="2" aria-hidden="true"><path d="M1 5H9M5 1V9" /></svg>
        </button>
      </span>
      <span className={cell}>158%</span>
    </footer>
  );
}

const PANELS = [["properties", "Properties"], ["roller", "Styles"], ["gallery", "Gallery"], ["navigator", "Navigator"], ["pageDeck", "Page"], ["rollerFind", "Style Inspector"]];

function Sidebar() {
  return (
    <aside className="relative flex w-[59px] shrink-0 flex-col items-center gap-[8px] border-l border-[#b3b3b3] pt-[5px] pl-[2px]">
      <button aria-label="Sidebar Settings" className="mb-[4px] flex h-[30px] w-[36px] items-center justify-center"><Icon name="menu" /></button>
      {PANELS.map(([name, label], i) => (
        <button key={name} aria-label={label} className={`flex h-[34px] w-[36px] items-center justify-center rounded-md border ${i === 0 ? "border-[#cdcdcd] bg-[#e6e6e6]" : "border-transparent"}`}>
          <Icon name={name} />
        </button>
      ))}
      <button aria-label="Hide Sidebar" className="absolute top-[409px] -left-px flex h-[73px] w-[7px] items-center bg-[#9a9a9a]">
        <svg viewBox="0 0 5 8" className="ml-px h-[8px] w-[5px]" aria-hidden="true"><path d="M0 0L5 4L0 8Z" fill="#fff" /></svg>
      </button>
    </aside>
  );
}

export default function App() {
  return (
    <div className="flex h-screen flex-col overflow-hidden bg-[#fafafa] font-['Noto_Sans',sans-serif]">
      <TopBar />
      <div className="flex min-h-0 flex-1">
        <Dock />
        <main className="flex min-w-0 flex-1 flex-col">
          <TitleBar />
          <nav aria-label="Menu bar" className="flex h-[25px] shrink-0 items-center gap-[15px] border-b border-[#dedede] pl-[8px] text-[15px] leading-[20px] text-[#666]">
            {MENUS.map((m) => <button key={m}>{m}</button>)}
          </nav>
          <div className="flex h-[38px] shrink-0 items-center pl-[4px]">{renderTools(ROW1)}</div>
          <div className="flex h-[40px] shrink-0 items-center pl-[4px]">
            <Combo label="Paragraph Style" value="Default Paragraph Style" className="w-[202px]" inner />
            <Tool name="rollerNew" label="Update Style" />
            <Tool name="rollerAdd" label="New Style" />
            <Divider />
            <Combo label="Font Name" value="Times New Roman" className="mr-[8px] w-[221px]" />
            <Combo label="Font Size" value="12 pt" className="w-[101px]" />
            {renderTools(ROW2)}
          </div>
          <div className="flex min-h-0 flex-1">
            <div className="flex min-w-0 flex-1 flex-col">
              <div className="relative flex h-[24px] shrink-0 justify-center pr-[14px]">
                <span className="absolute top-[9px] left-[8px] size-[7px] border-b-2 border-l-2 border-[#999]" />
                <Ruler />
              </div>
              <div className="flex min-h-0 flex-1">
                <div className="flex min-w-0 flex-1 items-stretch justify-center overflow-hidden pr-[2px]"><Page /></div>
                <div className="flex w-[12px] shrink-0 justify-center pt-[77px]">
                  <span className="h-[206px] w-[6px] rounded-full bg-[#868686]" />
                </div>
              </div>
            </div>
            <Sidebar />
          </div>
          <StatusBar />
        </main>
      </div>
    </div>
  );
}
